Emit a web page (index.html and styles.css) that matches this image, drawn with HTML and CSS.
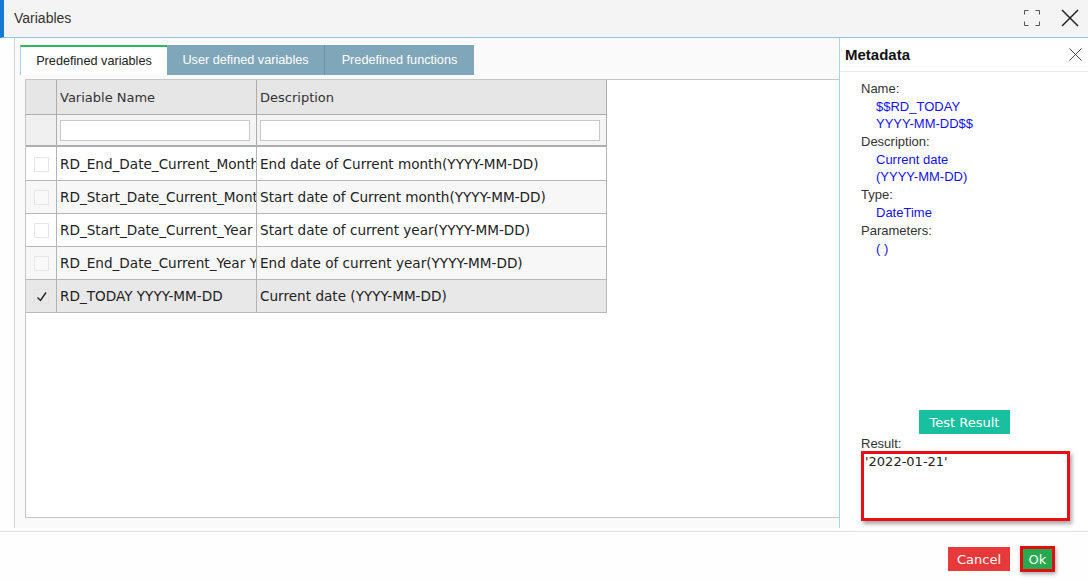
FILE: index.html
```html
<!DOCTYPE html>
<html>
<head>
<meta charset="utf-8">
<title>Variables</title>
<link rel="stylesheet" href="styles.css">
</head>
<body>
<div class="dialog">
  <header class="titlebar">
    <span class="title">Variables</span>
    <div class="title-actions">
      <svg class="icon-max" width="18" height="18" viewBox="0 0 18 18"><path d="M1.5 5.5V1.5h4M12.5 1.5h4v4M16.5 12.5v4h-4M5.5 16.5h-4v-4" fill="none" stroke="#555" stroke-width="1"/></svg>
      <svg class="icon-close" width="18" height="18" viewBox="0 0 18 18"><path d="M1 1L17 17M17 1L1 17" fill="none" stroke="#222" stroke-width="1.5"/></svg>
    </div>
  </header>
  <div class="main">
    <section class="workarea">
      <nav class="tabs">
        <div class="tab active">Predefined variables</div>
        <div class="tab t2">User defined variables</div>
        <div class="tab t3">Predefined functions</div>
      </nav>
      <div class="grid">
        <table class="vars">
          <thead>
            <tr class="head">
              <th class="c-chk"></th>
              <th class="c-name">Variable Name</th>
              <th class="c-desc">Description</th>
            </tr>
            <tr class="filter">
              <th class="c-chk"></th>
              <th class="c-name"><input class="finput" type="text"></th>
              <th class="c-desc"><input class="finput" type="text"></th>
            </tr>
          </thead>
          <tbody>
            <tr class="row first">
              <td class="c-chk"><span class="cb"></span></td>
              <td class="c-name">RD_End_Date_Current_Month</td>
              <td class="c-desc">End date of Current month(YYYY-MM-DD)</td>
            </tr>
            <tr class="row alt">
              <td class="c-chk"><span class="cb"></span></td>
              <td class="c-name">RD_Start_Date_Current_Month</td>
              <td class="c-desc">Start date of Current month(YYYY-MM-DD)</td>
            </tr>
            <tr class="row">
              <td class="c-chk"><span class="cb"></span></td>
              <td class="c-name">RD_Start_Date_Current_Year YYYY-MM-DD</td>
              <td class="c-desc">Start date of current year(YYYY-MM-DD)</td>
            </tr>
            <tr class="row alt">
              <td class="c-chk"><span class="cb"></span></td>
              <td class="c-name">RD_End_Date_Current_Year YYYY-MM-DD</td>
              <td class="c-desc">End date of current year(YYYY-MM-DD)</td>
            </tr>
            <tr class="row sel">
              <td class="c-chk"><span class="cb checked"><svg width="14" height="14" viewBox="0 0 14 14"><path d="M2.5 7.5L5.5 10.5L11 2.5" fill="none" stroke="#222" stroke-width="1.4"/></svg></span></td>
              <td class="c-name">RD_TODAY YYYY-MM-DD</td>
              <td class="c-desc">Current date (YYYY-MM-DD)</td>
            </tr>
          </tbody>
        </table>
      </div>
    </section>
    <aside class="meta">
      <div class="meta-head">
        <span class="meta-title">Metadata</span>
        <svg class="meta-close" width="13" height="13" viewBox="0 0 13 13"><path d="M0.5 0.5L12.5 12.5M12.5 0.5L0.5 12.5" fill="none" stroke="#444" stroke-width="1"/></svg>
      </div>
      <div class="meta-body">
        <div class="label">Name:</div>
        <div class="value">$$RD_TODAY YYYY-MM-DD$$</div>
        <div class="label">Description:</div>
        <div class="value">Current date (YYYY-MM-DD)</div>
        <div class="label">Type:</div>
        <div class="value">DateTime</div>
        <div class="label">Parameters:</div>
        <div class="value">( )</div>
      </div>
      <div class="result">
        <button class="btn-test">Test Result</button>
        <div class="label result-label">Result:</div>
        <div class="result-box">'2022-01-21'</div>
      </div>
    </aside>
  </div>
  <footer class="footer">
    <button class="btn cancel">Cancel</button>
    <span class="ok-frame"><button class="btn ok">Ok</button></span>
  </footer>
</div>
</body>
</html>
```

FILE: styles.css
```css
* { box-sizing: border-box; }
html, body { margin: 0; padding: 0; }
body {
  background: #fefefe;
  font-family: "Liberation Sans", Arial, sans-serif;
  color: #333;
}
.dialog {
  width: 1088px;
  height: 580px;
  display: flex;
  flex-direction: column;
  overflow: hidden;
}
.titlebar {
  height: 38px;
  flex: none;
  display: flex;
  align-items: center;
  background: #f4f4f4;
  border-left: 4px solid #1878d3;
  border-bottom: 1px solid #8fc2de;
  padding-left: 10px;
  padding-bottom: 1px;
}
.title {
  font-size: 14px;
  color: #333;
}
.title-actions {
  margin-left: auto;
  display: flex;
  align-items: center;
  gap: 20px;
  padding-right: 9px;
}
.title-actions svg { display: block; }

.main {
  flex: 1;
  display: flex;
  padding-left: 14px;
  padding-bottom: 3px;
  border-bottom: 1px solid #e2e2e2;
}
.workarea {
  width: 825px;
  flex: none;
  display: flex;
  flex-direction: column;
  background: #fafafa;
  border-left: 1px solid #d4d4d4;
  padding: 7px 0 10px 5px;
}
.tabs {
  display: flex;
  height: 30px;
  margin-bottom: 4px;
}
.tab {
  height: 30px;
  font-size: 12.7px;
  line-height: 30px;
  text-align: center;
  color: #fff;
  background: #7fa6b9;
}
.tab.active {
  width: 147px;
  background: #fff;
  color: #222;
  border-top: 2px solid #2fb863;
  border-left: 1px solid #a9d1e8;
  line-height: 28px;
}
.tab.t2 {
  width: 158px;
  border-right: 1px solid #6c93a6;
}
.tab.t3 {
  width: 149px;
}
.grid {
  flex: 1;
  margin-left: 5px;
  background: #fff;
  border: 1px solid #c6c6c6;
  border-right: none;
}
.vars {
  border-collapse: separate;
  border-spacing: 0;
  table-layout: fixed;
  width: 581px;
  font-family: "DejaVu Sans", Verdana, sans-serif;
  font-size: 13.6px;
  color: #222;
}
.vars th, .vars td {
  padding: 0 3px;
  white-space: nowrap;
  overflow: hidden;
  text-overflow: clip;
  text-align: left;
  font-weight: normal;
  border-right: 1px solid #b4b4b4;
  border-bottom: 1px solid #b8b8b8;
}
.vars .c-chk { width: 31px; padding: 0; text-align: center; }
.vars .c-name { width: 200px; }
.vars .c-desc { width: 350px; }
.head th {
  height: 35px;
  font-size: 13px;
  background: #e6e6e6;
  color: #333;
  border-color: #adadad;
}
.filter th {
  height: 32px;
  background: #f4f4f4;
  border-bottom: 2px solid #adadad;
  border-right-color: #adadad;
  padding-right: 6px;
}
.filter th.c-chk { background: #f0f0f0; padding: 0; }
.finput {
  display: block;
  width: 100%;
  height: 21px;
  border: 1px solid #c8c8c8;
  background: #fff;
  margin: 0;
  padding: 0 3px;
}
.row td { height: 33px; background: #fff; }
.row.first td { height: 34px; }
.row.alt td { background: #f7f7f7; }
.row.sel td { background: #e8e8e8; }
.cb {
  display: inline-block;
  width: 15px;
  height: 15px;
  vertical-align: middle;
  border: 1px solid #e6e6e6;
  background: #fff;
  position: relative;
}
.row.alt .cb { background: #f9f9f9; }
.cb.checked {
  background: #e8e8e8;
  border-color: #e2e2e2;
}
.cb svg {
  position: absolute;
  left: 0;
  top: 0;
}

.meta {
  flex: 1;
  display: flex;
  flex-direction: column;
  background: #fff;
  border-left: 1px solid #a5d2ec;
}
.meta-head {
  height: 34px;
  flex: none;
  display: flex;
  align-items: center;
  padding-left: 5px;
  padding-right: 6px;
  border-bottom: 1px solid #ececec;
}
.meta-title {
  font-weight: bold;
  font-size: 15px;
  color: #111;
}
.meta-close { margin-left: auto; display: block; }
.meta-body {
  flex: 1;
  padding: 8px 0 0 21px;
  font-size: 13px;
}
.label {
  font-size: 13px;
  line-height: 17px;
  color: #333;
}
.value {
  font-size: 13px;
  line-height: 17px;
  color: #1212ee;
  margin: 1px 0 1px 15px;
  width: 105px;
}
.result {
  display: flex;
  flex-direction: column;
  padding: 0 18px 7px 21px;
}
.btn-test {
  align-self: center;
  width: 91px;
  height: 24px;
  border: none;
  background: #19c09f;
  color: #fff;
  font-family: "DejaVu Sans", Verdana, sans-serif;
  font-size: 13px;
  padding: 0;
  margin-right: 2px;
}
.result-label {
  margin-top: 2px;
  line-height: 15px;
}
.result-box {
  height: 70px;
  border: 3px solid #ea0f14;
  background: #fff;
  box-shadow: 2px 3px 4px rgba(0,0,0,0.35);
  font-family: "DejaVu Sans", Verdana, sans-serif;
  font-size: 13px;
  line-height: 16px;
  color: #222;
  padding: 0 1px;
}

.footer {
  height: 48px;
  flex: none;
  display: flex;
  align-items: center;
  justify-content: flex-end;
  gap: 10px;
  padding: 6px 33px 0 0;
}
.btn {
  border: none;
  color: #fff;
  font-family: "DejaVu Sans", Verdana, sans-serif;
  font-size: 13px;
  padding: 0;
}
.cancel {
  width: 62px;
  height: 24px;
  background: #e8393a;
}
.ok-frame {
  display: block;
  border: 3px solid #e10e0e;
  box-shadow: 1px 2px 4px rgba(0,0,0,0.35);
}
.ok {
  display: block;
  width: 29px;
  height: 20px;
  background: #26a94f;
}
```
